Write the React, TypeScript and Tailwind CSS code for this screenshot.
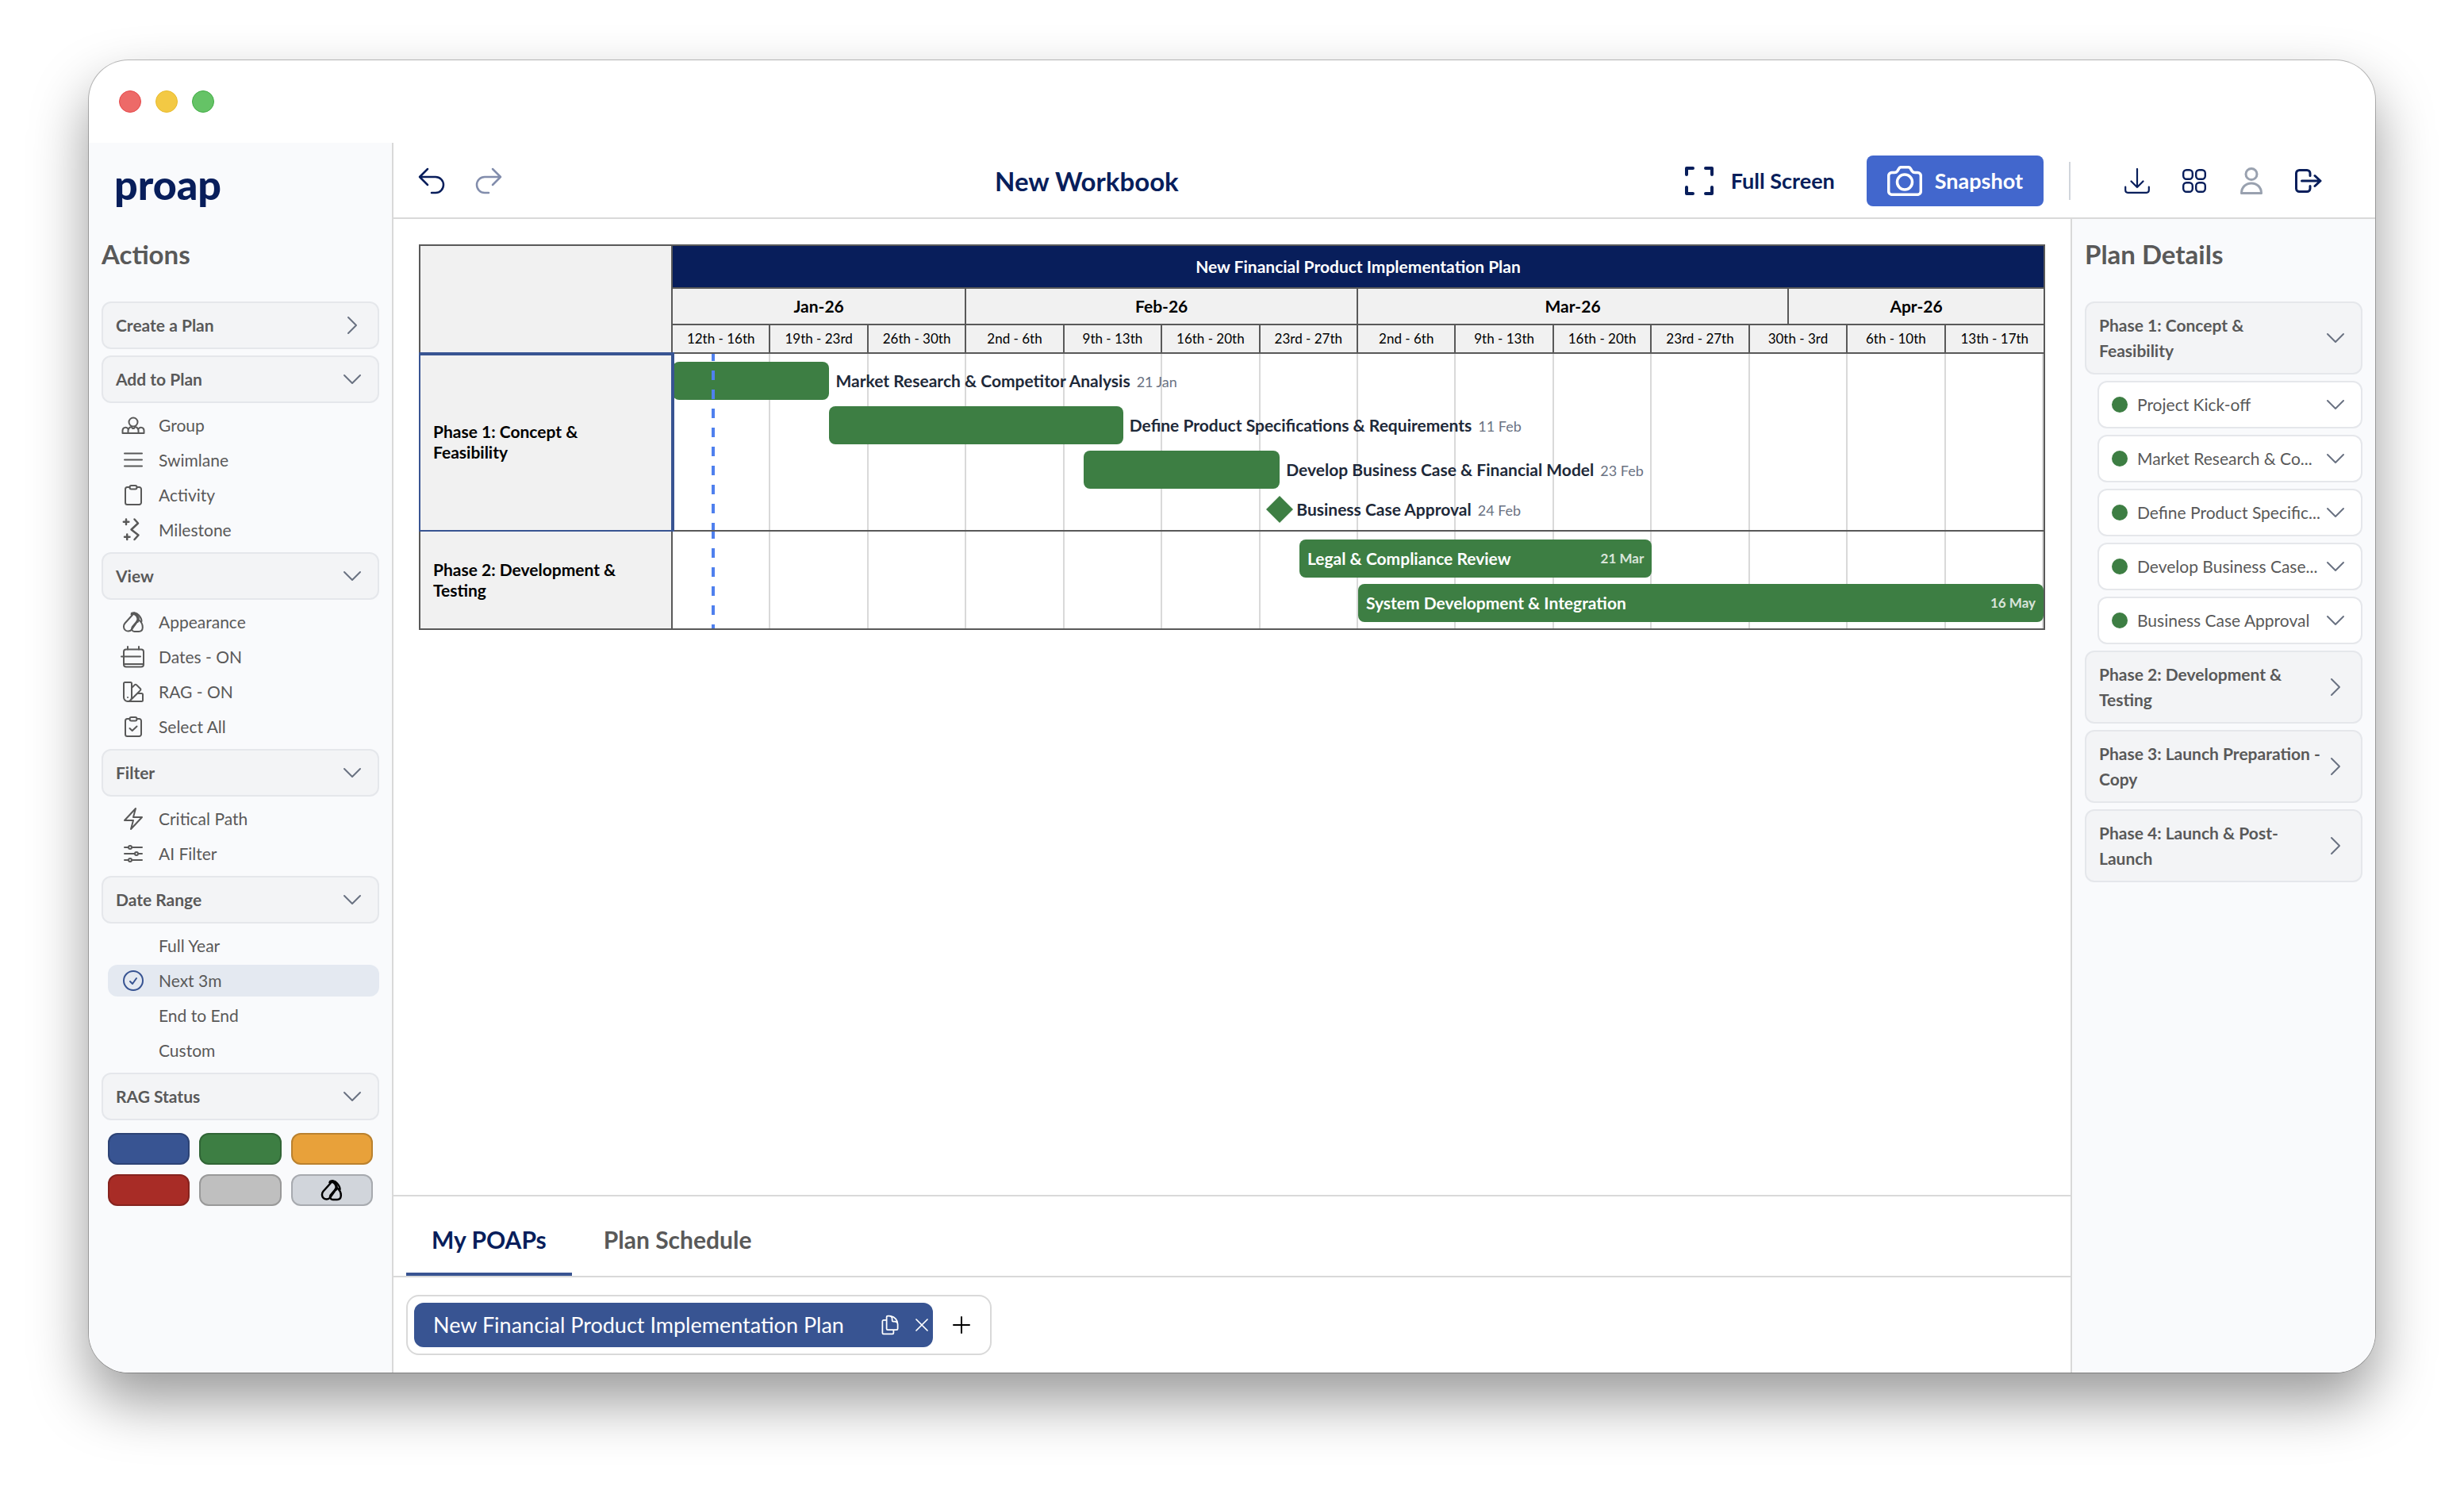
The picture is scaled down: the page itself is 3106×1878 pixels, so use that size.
import type { ReactNode } from "react";
import {
  HiOutlineAdjustmentsHorizontal,
  HiOutlineArrowUturnLeft,
  HiOutlineArrowUturnRight,
  HiOutlineBolt,
  HiOutlineCheckCircle,
  HiOutlineChevronDown,
  HiOutlineChevronRight,
  HiOutlineDocumentDuplicate,
  HiOutlinePlus,
  HiOutlineSwatch,
  HiOutlineXMark,
} from "react-icons/hi2";

/* ---------- icons ---------- */

function Icon({ children, stroke = 2 }: { children?: ReactNode; stroke?: number }) {
  return (
    <svg
      viewBox="0 0 32 32"
      className="size-8 shrink-0"
      fill="none"
      stroke="currentColor"
      strokeWidth={stroke}
      strokeLinecap="round"
      strokeLinejoin="round"
      aria-hidden="true"
    >
      {children}
    </svg>
  );
}

const GroupIcon = () => (
  <Icon>
    <circle cx="16" cy="12" r="5.5" />
    <path d="M2.5 26v-3.5a3.8 3.8 0 0 1 7.2-1.6M29.5 26v-3.5a3.8 3.8 0 0 0-7.2-1.6M2.5 26h27" />
    <path d="M9.5 26v-3c0-2.6 1.8-4.4 4.2-5l1.3 2h2l1.3-2c2.4.6 4.2 2.4 4.2 5v3" />
  </Icon>
);
const SwimlaneIcon = () => (
  <Icon>
    <path d="M5 7.5h22M5 15.5h22M5 23.5h22" />
  </Icon>
);
const ClipboardIcon = ({ checked = false }: { checked?: boolean }) => (
  <Icon>
    <path d="M11.5 6h-3A2.5 2.5 0 0 0 6 8.5v17A2.5 2.5 0 0 0 8.5 28h15a2.5 2.5 0 0 0 2.5-2.5v-17A2.5 2.5 0 0 0 23.5 6h-3" />
    <path d="M13.5 4h5a2 2 0 0 1 2 2v.5a2 2 0 0 1-2 2h-5a2 2 0 0 1-2-2V6a2 2 0 0 1 2-2z" />
    {checked && <path d="M11.500 18l3.2 3 5.8-5.500" />}
  </Icon>
);
const MilestoneIcon = () => (
  <Icon stroke={2.5}>
    <path d="M7 2.5V9M3.8 5.800h6.500M8.200 21.500V28M5 24.700h6.500" />
    <path d="M17.500 2.500l4.500 5-8.500 8 9 7-5 5.500" />
  </Icon>
);
const AppearanceIcon = ({ stroke = 2 }: { stroke?: number }) => (
  <Icon stroke={stroke}>
    <path d="M15 7L5.500 17.500c-2.300 2.600-2 6.400.3 8.600 2.400 2.200 6 1.800 8.200-.6L21.500 15" />
    <path d="M13.500 6.500C16 3 20 4 23 7.500c2 2.300 3.600 4.500 3.500 7.500" />
    <path d="M14.500 5.500C17.500 4.500 21 7 22 11c.4 1.600 0 3-.8 4.200" strokeWidth="3.5" />
    <path d="M22.500 13c3.500 2.500 5.500 6 5.300 10-.2 3-2 5-4.800 5h-5.500c-3 0-4.500-3.200-2.800-5.800z" />
  </Icon>
);
const DatesIcon = () => (
  <Icon>
    <rect x="4" y="6.500" width="25" height="22" rx="3" />
    <path d="M9 3v3.500M23 3v3.500M1 15.500h24M4 25h25" />
  </Icon>
);
const FullScreenIcon = () => (
  <svg viewBox="0 0 36 36" className="size-9" fill="none" stroke="currentColor" strokeWidth="4" strokeLinecap="round" strokeLinejoin="round" aria-hidden="true">
    <path d="M10 2H2v8M26 2h8v8M10 34H2v-8M26 34h8v-8" />
  </svg>
);
const CameraIcon = () => (
  <svg viewBox="0 0 44 38" className="h-[38px] w-11" fill="none" stroke="currentColor" strokeWidth="3.500" strokeLinejoin="round" aria-hidden="true">
    <path d="M5.700 8.500H9c2 0 2.800-.5 3.700-1.800l2-3.200c.6-1.200 1.300-1.800 2.800-1.800h9c1.500 0 2.200.6 2.800 1.800l2 3.200c.9 1.300 1.700 1.800 3.700 1.800h3.300a4 4 0 0 1 4 4v19.800a4 4 0 0 1-4 4H5.700a4 4 0 0 1-4-4V12.500a4 4 0 0 1 4-4z" />
    <circle cx="22" cy="20.500" r="9.500" />
  </svg>
);
const DownloadIcon = () => (
  <svg viewBox="0 0 32 32" className="size-8" fill="none" stroke="currentColor" strokeWidth="2.200" strokeLinecap="round" strokeLinejoin="round" aria-hidden="true">
    <path d="M16 1v23M8.500 16.500L16 24l7.500-7.500M1.200 23.500v4.300a3 3 0 0 0 3 3h23.600a3 3 0 0 0 3-3v-4.300" />
  </svg>
);
const GridIcon = () => (
  <svg viewBox="0 0 30 30" className="size-[30px]" fill="none" stroke="currentColor" strokeWidth="2.400" aria-hidden="true">
    <rect x="1.200" y="1.200" width="11.600" height="11.600" rx="4" />
    <rect x="17.200" y="1.200" width="11.600" height="11.600" rx="4" />
    <rect x="1.200" y="17.200" width="11.600" height="11.600" rx="4" />
    <rect x="17.200" y="17.200" width="11.600" height="11.600" rx="4" />
  </svg>
);
const UserIcon = () => (
  <svg viewBox="0 0 28 34" className="h-[34px] w-7" fill="none" stroke="currentColor" strokeWidth="3" strokeLinejoin="round" aria-hidden="true">
    <circle cx="14" cy="8.500" r="7" />
    <path d="M1.500 32.500C1.500 25 7 20 14 20s12.500 5 12.500 12.500z" />
  </svg>
);
const LogoutIcon = () => (
  <svg viewBox="0 0 34 30" className="h-[30px] w-[34px]" fill="none" stroke="currentColor" strokeWidth="3" strokeLinecap="round" strokeLinejoin="round" aria-hidden="true">
    <path d="M19 8.500v-3a4 4 0 0 0-4-4H5.500a4 4 0 0 0-4 4v19a4 4 0 0 0 4 4H15a4 4 0 0 0 4-4v-3" />
    <path d="M8.500 15H32M25 8.500l7 6.500-7 6.500" />
  </svg>
);

/* ---------- left panel ---------- */

function Chevron({ open }: { open: boolean }) {
  return open ? (
    <HiOutlineChevronDown className="size-8 shrink-0 text-gray-500" />
  ) : (
    <HiOutlineChevronRight className="size-8 shrink-0 text-gray-500" />
  );
}

function SectionButton({ label, open }: { label: string; open: boolean }) {
  return (
    <button
      type="button"
      aria-expanded={open}
      className="flex h-15 w-full items-center justify-between rounded-xl border-2 border-[#e5e7eb] bg-[#f3f4f6] px-4 text-[21px] font-bold"
    >
      {label}
      <Chevron open={open} />
    </button>
  );
}

type Item = { label: string; icon?: ReactNode; selected?: boolean };
type Section = { label: string; open?: boolean; items?: Item[] };

const sections: Section[] = [
  { label: "Create a Plan", open: false },
  {
    label: "Add to Plan",
    items: [
      { label: "Group", icon: <GroupIcon /> },
      { label: "Swimlane", icon: <SwimlaneIcon /> },
      { label: "Activity", icon: <ClipboardIcon /> },
      { label: "Milestone", icon: <MilestoneIcon /> },
    ],
  },
  {
    label: "View",
    items: [
      { label: "Appearance", icon: <AppearanceIcon /> },
      { label: "Dates - ON", icon: <DatesIcon /> },
      { label: "RAG - ON", icon: <HiOutlineSwatch className="size-8" /> },
      { label: "Select All", icon: <ClipboardIcon checked /> },
    ],
  },
  {
    label: "Filter",
    items: [
      { label: "Critical Path", icon: <HiOutlineBolt className="size-8" /> },
      { label: "AI Filter", icon: <HiOutlineAdjustmentsHorizontal className="size-8" /> },
    ],
  },
  {
    label: "Date Range",
    items: [
      { label: "Full Year" },
      { label: "Next 3m", icon: <HiOutlineCheckCircle className="size-8 text-[#385492]" />, selected: true },
      { label: "End to End" },
      { label: "Custom" },
    ],
  },
  { label: "RAG Status" },
];

const swatches = [
  { name: "Blue", style: "bg-[#385492] border-[#2d4375]" },
  { name: "Green", style: "bg-[#3d7e43] border-[#316536]" },
  { name: "Amber", style: "bg-[#e8a13a] border-[#ba812e]" },
  { name: "Red", style: "bg-[#a82c26] border-[#86231e]" },
  { name: "Grey", style: "bg-[#bfbfbf] border-[#999999]" },
  { name: "Custom colour", style: "bg-[#d1d5db] border-[#a7aaaf]", icon: <AppearanceIcon stroke={2.5} /> },
];

function Sidebar() {
  return (
    <aside className="flex w-[384px] shrink-0 flex-col border-r-2 border-[#d9d9d9] bg-[#f9fafc] px-4">
      <a href="#" className="mt-4 ml-4 flex h-18 items-center text-[52px] leading-none font-black text-[#081e5b]">
        proap
      </a>
      <h2 className="mt-8 mb-10 text-[33px] leading-10 font-bold">Actions</h2>
      <nav className="flex flex-col gap-2">
        {sections.map((s) => (
          <div key={s.label} className="flex flex-col gap-2">
            <SectionButton label={s.label} open={s.open ?? true} />
            {s.items && (
              <ul className="flex flex-col gap-1 pl-2">
                {s.items.map((it) => (
                  <li key={it.label}>
                    <button
                      type="button"
                      className={
                        it.selected
                          ? "flex h-10 w-full items-center gap-4 rounded-xl bg-[#e4e9f1] px-4 text-[21px]"
                          : "flex h-10 w-full items-center gap-4 rounded-xl px-4 text-[21px]"
                      }
                    >
                      {it.icon ?? <Icon />}
                      {it.label}
                    </button>
                  </li>
                ))}
              </ul>
            )}
          </div>
        ))}
      </nav>
      <div className="mt-4 mr-2 ml-2 grid grid-cols-3 gap-3">
        {swatches.map((s) => (
          <button
            key={s.name}
            type="button"
            aria-label={s.name}
            className={`flex h-10 items-center justify-center rounded-xl border-2 text-black ${s.style}`}
          >
            {s.icon}
          </button>
        ))}
      </div>
    </aside>
  );
}

/* ---------- header ---------- */

function Header() {
  return (
    <header className="flex h-24 items-center border-b-2 border-[#d9d9d9] pt-0.5 pr-12 pl-7 text-[#081e5b]">
      <div className="flex gap-8">
        <button type="button" aria-label="Undo">
          <HiOutlineArrowUturnLeft className="size-10" />
        </button>
        <button type="button" aria-label="Redo" className="opacity-50" disabled>
          <HiOutlineArrowUturnRight className="size-10" />
        </button>
      </div>
      <h1 className="flex-1 text-center text-[33px] leading-10 font-bold">New Workbook</h1>
      <button type="button" className="mr-5 flex items-center gap-[22px] px-5 text-[27px] font-bold">
        <FullScreenIcon />
        Full Screen
      </button>
      <button type="button" className="flex h-16 items-center gap-4 rounded-lg bg-[#4267cd] px-[26px] text-[27px] font-bold text-white">
        <CameraIcon />
        Snapshot
      </button>
      <div className="mr-12 ml-8 h-12 w-0.5 bg-gray-300" />
      <div className="flex items-center">
        <button type="button" aria-label="Download" className="flex w-18 justify-center">
          <DownloadIcon />
        </button>
        <button type="button" aria-label="Apps" className="flex w-18 justify-center">
          <GridIcon />
        </button>
        <button type="button" aria-label="Account" className="flex w-18 justify-center text-gray-400">
          <UserIcon />
        </button>
        <button type="button" aria-label="Log out" className="flex w-18 justify-center">
          <LogoutIcon />
        </button>
      </div>
    </header>
  );
}

/* ---------- gantt ---------- */

const DAYS = 70;
const TIMELINE = "grid grid-cols-[repeat(70,minmax(0,1fr))]";

const months = [
  { label: "Jan-26", days: 15 },
  { label: "Feb-26", days: 20 },
  { label: "Mar-26", days: 22 },
  { label: "Apr-26", days: 13 },
];
const weeks = [
  "12th - 16th", "19th - 23rd", "26th - 30th", "2nd - 6th", "9th - 13th", "16th - 20th", "23rd - 27th",
  "2nd - 6th", "9th - 13th", "16th - 20th", "23rd - 27th", "30th - 3rd", "6th - 10th", "13th - 17th",
];

type Task = { label: string; date: string; from: number; to: number; inside?: boolean; milestone?: boolean };
const lanes: { label: string; selected?: boolean; tasks: Task[] }[] = [
  {
    label: "Phase 1: Concept &\nFeasibility",
    selected: true,
    tasks: [
      { label: "Market Research & Competitor Analysis", date: "21 Jan", from: 0, to: 8 },
      { label: "Define Product Specifications & Requirements", date: "11 Feb", from: 8, to: 23 },
      { label: "Develop Business Case & Financial Model", date: "23 Feb", from: 21, to: 31 },
      { label: "Business Case Approval", date: "24 Feb", from: 31, to: 32, milestone: true },
    ],
  },
  {
    label: "Phase 2: Development &\nTesting",
    tasks: [
      { label: "Legal & Compliance Review", date: "21 Mar", from: 32, to: 50, inside: true },
      { label: "System Development & Integration", date: "16 May", from: 35, to: 70, inside: true },
    ],
  },
];

const span = (from: number, to: number) => ({ gridColumn: `${from + 1} / ${to + 1}` });

function OutsideLabel({ task }: { task: Task }) {
  return (
    <span className="flex items-baseline gap-2">
      <span className="text-[21px] font-bold text-gray-800">{task.label}</span>
      <span className="text-[18px] text-gray-500">{task.date}</span>
    </span>
  );
}

function TaskRow({ task }: { task: Task }) {
  if (task.milestone) {
    return (
      <div className={TIMELINE}>
        <div style={span(task.from, DAYS)} className="-ml-[17px] flex h-9 items-center gap-1 whitespace-nowrap">
          <svg viewBox="0 0 34 34" className="size-[34px] text-[#3d7e43]" fill="currentColor" aria-hidden="true">
            <path d="M17 0l17 17-17 17L0 17z" />
          </svg>
          <OutsideLabel task={task} />
        </div>
      </div>
    );
  }
  return (
    <div className={TIMELINE}>
      <div style={span(task.from, task.to)} className="flex h-12 items-center justify-between rounded-lg bg-[#3d7e43] px-[10px] whitespace-nowrap text-white">
        {task.inside && (
          <>
            <span className="text-[21px] font-bold">{task.label}</span>
            <span className="text-[17px] font-bold text-white/80">{task.date}</span>
          </>
        )}
      </div>
      {!task.inside && (
        <div style={span(task.to, DAYS)} className="flex items-center pl-2 whitespace-nowrap">
          <OutsideLabel task={task} />
        </div>
      )}
    </div>
  );
}

function Gantt() {
  return (
    <section aria-label="Plan" className="grid grid-cols-[318px_minmax(0,1fr)] border-2 border-[#595959] text-black">
      <div className="border-r-2 border-b-2 border-[#595959] bg-[#f1f1f1]" />
      <div>
        <div className="flex h-[54px] items-center justify-center border-b-2 border-[#595959] bg-[#081e5b] text-[21px] font-bold text-white">
          New Financial Product Implementation Plan
        </div>
        <div className={`${TIMELINE} h-[46px] border-b-2 border-[#595959] bg-[#f1f1f1] text-[21px] font-bold`}>
          {months.map((m) => (
            <div
              key={m.label}
              style={{ gridColumn: `span ${m.days}` }}
              className="flex items-center justify-center border-r-2 border-[#595959] last:border-r-0"
            >
              {m.label}
            </div>
          ))}
        </div>
        <div className="grid h-9 grid-cols-14 border-b-2 border-[#595959] bg-[#f1f1f1] text-[17px]">
          {weeks.map((w, i) => (
            <div key={i} className="flex items-center justify-center border-r-2 border-[#595959] whitespace-nowrap last:border-r-0">
              {w}
            </div>
          ))}
        </div>
      </div>
      {lanes.map((lane) => (
        <div key={lane.label} className="group col-span-2 grid grid-cols-subgrid">
          <div className="relative flex items-center border-r-2 border-b-2 border-[#595959] bg-[#f1f1f1] px-4 text-[21px] leading-[26px] font-bold whitespace-pre-line group-last:border-b-0">
            {lane.label}
            {lane.selected && (
              <div className="absolute -top-0.5 -right-1 -bottom-0.5 -left-0.5 z-10 border-t-4 border-r-4 border-b-2 border-l-2 border-[#385492]" />
            )}
          </div>
          <div className="relative border-b-2 border-[#595959] pt-[10px] pb-2 group-last:border-b-0">
            <div className="absolute inset-0 grid grid-cols-14" aria-hidden="true">
              {weeks.map((_, i) => (
                <div key={i} className="border-r-2 border-[#d9d9d9]" />
              ))}
            </div>
            <div className="relative flex flex-col gap-2">
              {lane.tasks.map((t) => (
                <TaskRow key={t.label} task={t} />
              ))}
            </div>
            <div
              className="absolute inset-y-0 left-[49px] w-1 bg-[repeating-linear-gradient(#4f80ee_0px,#4f80ee_9px,transparent_9px,transparent_21px,#4f80ee_21px,#4f80ee_24px)]"
              aria-hidden="true"
            />
          </div>
        </div>
      ))}
    </section>
  );
}

/* ---------- bottom tabs ---------- */

function BottomPanel() {
  return (
    <div className="border-t-2 border-[#d9d9d9]">
      <div role="tablist" className="flex h-[102px] gap-2 border-b-2 border-[#d9d9d9] px-4 text-[30px] font-bold">
        <button role="tab" aria-selected="true" type="button" className="border-b-4 border-[#385492] px-8 pt-4 pb-1 text-[#081e5b]">
          My POAPs
        </button>
        <button role="tab" aria-selected="false" type="button" className="border-b-4 border-transparent px-8 pt-4 pb-1">
          Plan Schedule
        </button>
      </div>
      <div className="flex px-4 py-[22px]">
        <div className="flex items-center gap-5 rounded-2xl border-2 border-[#d9d9d9] py-2 pr-5 pl-2">
          <div className="flex h-14 w-[654px] items-center gap-3 rounded-xl bg-[#385492] text-white">
            <button type="button" className="flex-1 pl-6 text-left text-[27px] whitespace-nowrap">
              New Financial Product Implementation Plan
            </button>
            <button type="button" aria-label="Duplicate">
              <HiOutlineDocumentDuplicate className="size-7" />
            </button>
            <button type="button" aria-label="Close">
              <HiOutlineXMark className="size-7" />
            </button>
          </div>
          <button type="button" aria-label="Add plan" className="text-black">
            <HiOutlinePlus className="size-8" />
          </button>
        </div>
      </div>
    </div>
  );
}

/* ---------- right panel ---------- */

const activities = [
  "Project Kick-off",
  "Market Research & Co...",
  "Define Product Specific...",
  "Develop Business Case...",
  "Business Case Approval",
];
const phases = [
  { label: "Phase 1: Concept &\nFeasibility", open: true },
  { label: "Phase 2: Development &\nTesting", open: false },
  { label: "Phase 3: Launch Preparation -\nCopy", open: false },
  { label: "Phase 4: Launch & Post-\nLaunch", open: false },
];

function DetailsPanel() {
  return (
    <aside className="w-[384px] shrink-0 border-l-2 border-[#d9d9d9] bg-[#f9fafc] px-4 pt-6">
      <h2 className="mb-10 text-[33px] leading-10 font-bold">Plan Details</h2>
      <div className="flex flex-col gap-2">
        {phases.map((p) => (
          <div key={p.label} className="flex flex-col gap-2">
            <button
              type="button"
              aria-expanded={p.open}
              className="flex w-full items-center justify-between rounded-xl border-2 border-[#e5e7eb] bg-[#f3f4f6] px-4 py-3 text-left text-[21px] leading-8 font-bold"
            >
              <span className="flex-1 whitespace-pre-line">{p.label}</span>
              <Chevron open={p.open} />
            </button>
            {p.open && (
              <ul className="flex flex-col gap-2 pl-4">
                {activities.map((c) => (
                  <li key={c}>
                    <button
                      type="button"
                      className="flex h-15 w-full items-center rounded-xl border-2 border-[#e5e7eb] bg-white px-4 text-left text-[21px]"
                    >
                      <span className="mr-3 size-5 shrink-0 rounded-full bg-[#3d7e43]" />
                      <span className="min-w-0 flex-1 whitespace-nowrap">{c}</span>
                      <Chevron open />
                    </button>
                  </li>
                ))}
              </ul>
            )}
          </div>
        ))}
      </div>
    </aside>
  );
}

/* ---------- window ---------- */

export default function App() {
  return (
    <div className="flex min-h-screen bg-white px-28 pt-19 pb-37 font-['Lato','Open_Sans',sans-serif] text-[#595959]">
      <div className="flex min-w-0 flex-1 flex-col overflow-hidden rounded-[50px] bg-white shadow-[0_0_0_1px_rgba(0,0,0,0.25),0_36px_72px_rgba(0,0,0,0.4)]">
        <div className="flex h-26 shrink-0 items-center gap-[18px] px-[38px]">
          <span className="size-7 rounded-full border border-[#e5484a] bg-[#ed6a68]" />
          <span className="size-7 rounded-full border border-[#e8bb2d] bg-[#f3c944]" />
          <span className="size-7 rounded-full border border-[#42ad46] bg-[#65c366]" />
        </div>
        <div className="flex flex-1">
          <Sidebar />
          <div className="flex min-w-0 flex-1 flex-col">
            <Header />
            <div className="flex flex-1">
              <main className="flex min-w-0 flex-1 flex-col justify-between">
                <div className="p-8">
                  <Gantt />
                </div>
                <BottomPanel />
              </main>
              <DetailsPanel />
            </div>
          </div>
        </div>
      </div>
    </div>
  );
}
